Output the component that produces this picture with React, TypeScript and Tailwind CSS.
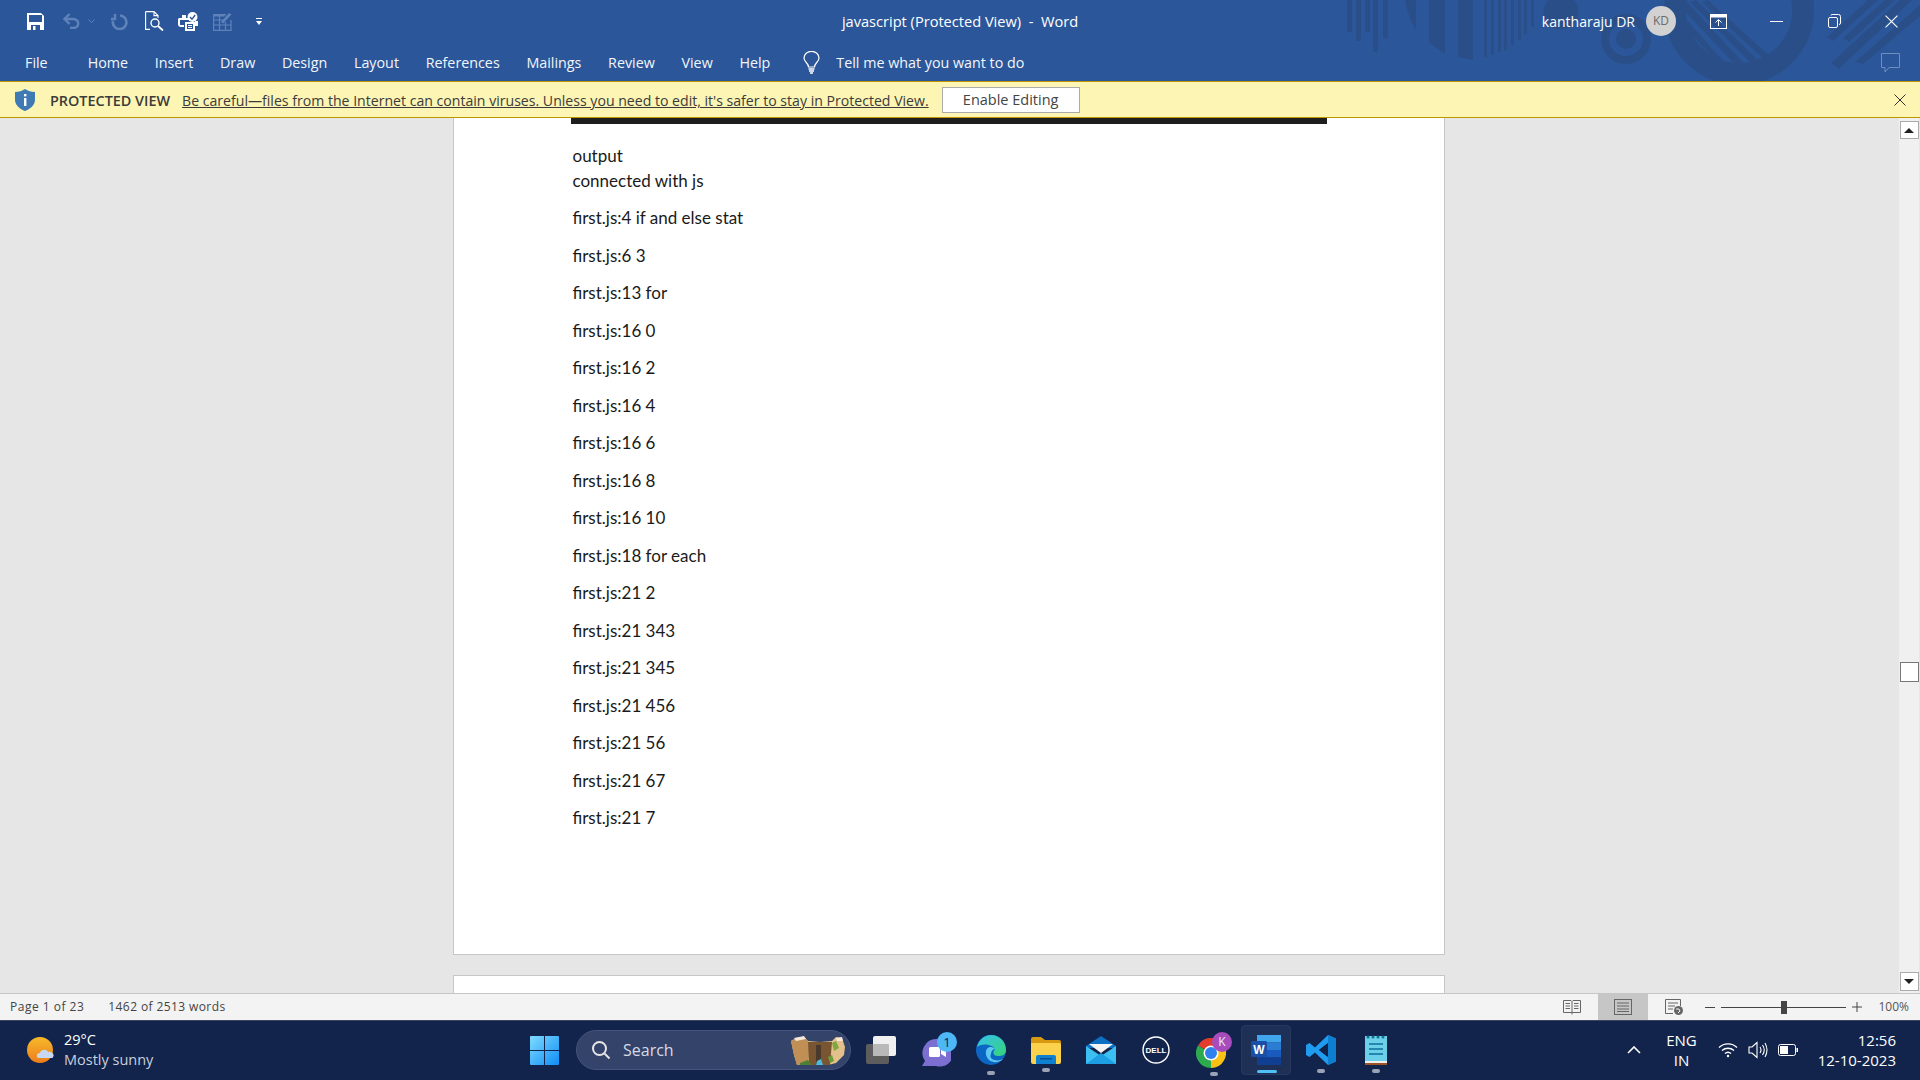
import React from "react";

const tabs = ["Home", "Insert", "Draw", "Design", "Layout", "References", "Mailings", "Review", "View", "Help"];

const docLines = [
  "first.js:4 if and else stat",
  "first.js:6 3",
  "first.js:13 for",
  "first.js:16 0",
  "first.js:16 2",
  "first.js:16 4",
  "first.js:16 6",
  "first.js:16 8",
  "first.js:16 10",
  "first.js:18 for each",
  "first.js:21 2",
  "first.js:21 343",
  "first.js:21 345",
  "first.js:21 456",
  "first.js:21 56",
  "first.js:21 67",
  "first.js:21 7",
];

// ribbon background art, sits behind the title bar
const TitleArt = () => (
  <svg className="absolute left-[1340px] top-0 pointer-events-none" width="580" height="81" viewBox="0 0 580 81" fill="#2a4f88">
    <rect x="7" y="0" width="5" height="32" />
    <rect x="16" y="0" width="5" height="41" />
    <rect x="25" y="0" width="5" height="32" />
    <rect x="33" y="0" width="5" height="52" />
    <rect x="43" y="0" width="5" height="38" />
    <path d="M65 0 C67 12 71 22 76 30 V0 Z" />
    <path d="M89 0 V43 L105 54 V0 Z" />
    <path d="M118 0 V57 L133 60 V0 Z" />
    <rect x="144" y="0" width="3" height="57" />
    <rect x="151" y="0" width="3" height="55" />
    <rect x="158" y="0" width="3" height="52" />
    <rect x="164" y="0" width="3" height="50" />
    <rect x="171" y="0" width="3" height="45" />
    <rect x="178" y="0" width="3" height="40" />
    <rect x="184" y="0" width="3" height="34" />
    <rect x="191" y="0" width="3" height="27" />
    <circle cx="221" cy="12" r="17.5" />
    <circle cx="286" cy="39" r="21" fill="none" stroke="#2a4f88" strokeWidth="8" />
    <circle cx="286" cy="39" r="10" />
    <circle cx="399" cy="10" r="64" fill="none" stroke="#2a4f88" strokeWidth="22" />
    <path d="M338 10 L391 70 L384 70 L333 14 Z" />
    <path d="M345 0 L410 70 L402 72 L338 4 Z" />
    <path d="M356 0 L424 66 L418 70 L350 2 Z" />
    <path d="M368 0 L434 60 L430 65 L362 2 Z" />
    <path d="M487 37 L528 0 L538 0 L493 41 Z" />
    <path d="M503 38 L545 0 L555 0 L509 42 Z" />
    <path d="M491 63 L560 0 L572 0 L499 69 Z" />
    <path d="M515 62 L580 5 L580 16 L523 64 Z" />
  </svg>
);

const SaveIcon = () => (
  <svg width="17" height="17" viewBox="0 0 17 17">
    <path d="M0 0 H14 L17 3 V17 H0 Z" fill="#fff" />
    <rect x="2" y="2" width="13" height="7" fill="#2b579a" />
    <rect x="4" y="12" width="9" height="5" fill="#2b579a" />
    <rect x="6" y="13" width="2.5" height="4" fill="#fff" />
  </svg>
);

const UndoIcon = () => (
  <svg width="18" height="16" viewBox="0 0 18 16" fill="none" stroke="#5f83b8" strokeWidth="2.4">
    <path d="M3 6 H11 C18 6 18 15 11 15 H8" />
    <path d="M7.5 1 L2.5 6 L7.5 11" />
  </svg>
);

const RedoIcon = () => (
  <svg width="18" height="17" viewBox="0 0 18 17" fill="none" stroke="#5f83b8" strokeWidth="2.6">
    <path d="M5 1 V6 H1" strokeWidth="2.4" />
    <path d="M10 2.5 A6.8 6.8 0 1 1 3 8" />
  </svg>
);

const PreviewIcon = () => (
  <svg width="19" height="20" viewBox="0 0 19 20" fill="none" stroke="#fff" strokeWidth="1.1">
    <path d="M.6 .6 H9 L13 4.6 V7 M9 .6 V4.6 H13 M.6 .6 V18.4 H5" />
    <circle cx="10" cy="12" r="4" strokeWidth="1.4" />
    <path d="M13 15 L18 19.5" strokeWidth="1.8" />
  </svg>
);

const PrintCheckIcon = () => (
  <svg width="20" height="19" viewBox="0 0 20 19">
    <path d="M4 3 H8 V6 H11 V8 H2 V13 H6 V15 H3 C1 15 0 14 0 12 V8 C0 6 1 6 2 6 H4 Z" fill="#fff" />
    <circle cx="14.5" cy="5" r="5" fill="#fff" />
    <path d="M12 5 L14 7.2 L17.2 3" fill="none" stroke="#2b579a" strokeWidth="1.4" />
    <rect x="7" y="10" width="10" height="9" fill="#fff" />
    <rect x="9" y="12" width="6" height="5" fill="#2b579a" />
    <path d="M10 13.5 H14 M10 15.5 H14" stroke="#fff" />
    <rect x="17" y="9" width="3" height="5" fill="#fff" />
  </svg>
);

const TableEditIcon = () => (
  <svg width="19" height="19" viewBox="0 0 19 19" fill="none" stroke="#5f83b8" strokeWidth="1.2">
    <path d="M.6 2.6 H13 M.6 2.6 V18.4 H18 V8 M.6 8 H11 M.6 13 H18 M6.5 2.6 V18.4 M12.5 10 V18.4" />
    <path d="M8 10 L16 1 L18.5 2.5 L10 11.5 Z" fill="#5f83b8" stroke="none" />
    <rect x=".6" y="2" width="11" height="2.5" fill="#5f83b8" stroke="none" />
  </svg>
);

const ShieldIcon = () => (
  <svg width="20" height="22" viewBox="0 0 20 22">
    <path d="M10 0 C13 2 16 3 20 3 V11 C20 16 15 20 10 22 C5 20 0 16 0 11 V3 C4 3 7 2 10 0 Z" fill="#3f7ab5" />
    <rect x="9" y="9" width="2.4" height="8" fill="#fff" />
    <rect x="9" y="5" width="2.4" height="2.4" fill="#fff" />
  </svg>
);

const CloseIcon = ({ size, color }: { size: number; color: string }) => (
  <svg width={size} height={size} viewBox="0 0 12 12" stroke={color} strokeWidth="1" fill="none">
    <path d="M.5 .5 L11.5 11.5 M11.5 .5 L.5 11.5" />
  </svg>
);

const Bulb = () => (
  <svg width="17" height="23" viewBox="0 0 17 23" fill="none" stroke="#fff" strokeWidth="1.2">
    <path d="M5.5 16 C5.5 12 1 11 1 7 A7.3 6.5 0 0 1 16 7 C16 11 11.5 12 11.5 16 Z" />
    <path d="M5.5 18 H11.5 M6 20 H11 M7 22 H10" strokeWidth="1.4" />
  </svg>
);

const WinIcon = () => (
  <svg width="29" height="29" viewBox="0 0 29 29">
    <defs>
      <linearGradient id="wing" x1="0" y1="0" x2="1" y2="1">
        <stop offset="0" stopColor="#7fdcff" />
        <stop offset="1" stopColor="#0f8cf5" />
      </linearGradient>
    </defs>
    <path d="M1 0 H14 V14 H0 V1 Q0 0 1 0 Z M15 0 H28 Q29 0 29 1 V14 H15 Z M0 15 H14 V29 H1 Q0 29 0 28 Z M15 15 H29 V28 Q29 29 28 29 H15 Z" fill="url(#wing)" />
  </svg>
);

const SearchArt = () => (
  <svg width="56" height="30" viewBox="0 0 56 30">
    <path d="M1 6 L6 3 L14 2 L18 6 L30 7 L42 6 L46 2 L52 3 L55 12 L54 20 L46 28 L38 30 L7 30 L4 20 Z" fill="#e4c08a" />
    <path d="M1 6 L6 3 L14 2 L18 6 L19 14 L18 30 L7 30 L4 20 Z" fill="#bf8f55" />
    <path d="M18 7 L42 7 L40 30 L19 30 Z" fill="#7a5531" />
    <path d="M26 10 H31 V30 H26 Z" fill="#4a3a2c" />
    <path d="M27 26 L31 24 L33 30 L26 30 Z" fill="#4fb9d8" />
    <path d="M42 8 L46 6 L49 13 L44 16 Z" fill="#7fa843" />
    <path d="M38 22 L42 20 L44 26 L40 28 Z" fill="#6d9c3a" />
    <path d="M10 28 L18 25 L22 30 L10 30 Z" fill="#4f7f33" />
    <path d="M4 3 L14 1 L16 4 L6 6 Z" fill="#f5e9dc" />
    <path d="M46 3 L52 2 L53 6 L47 6 Z" fill="#f5e9dc" />
  </svg>
);

const TaskView = () => (
  <div className="relative w-[30px] h-[28px]">
    <div className="absolute left-0 bottom-0 w-[23px] h-[20px] rounded-[2px] bg-[#5d5d5d]" />
    <div className="absolute right-0 top-0 w-[23px] h-[20px] rounded-[2px] bg-[#f0f0f0]" />
    <div className="absolute left-[7px] top-[8px] w-[16px] h-[12px] rounded-[1px] bg-[#b9b9b9]" />
  </div>
);

const TeamsIcon = () => (
  <div className="relative w-[36px] h-[36px]">
    <svg width="30" height="32" viewBox="0 0 30 32" className="absolute left-0 bottom-0">
      <path d="M15 3 A14 14 0 1 1 15 30 H1 L4 25 A14 14 0 0 1 15 3 Z" fill="#7b6fd1" />
      <rect x="8" y="11" width="11" height="10" rx="1.5" fill="#fff" />
      <path d="M20 14 L25 11 V21 L20 18 Z" fill="#fff" />
    </svg>
    <div className="absolute right-0 top-0 w-[20px] h-[20px] rounded-full bg-[#4db8f5] text-[13px] leading-[20px] text-center text-[#10204a]">1</div>
  </div>
);

const EdgeIcon = () => (
  <svg width="30" height="34" viewBox="0 0 30 30">
    <defs>
      <linearGradient id="edgeg" x1="0" y1="0" x2="1" y2="1">
        <stop offset="0" stopColor="#35c1f1" />
        <stop offset="1" stopColor="#36d475" />
      </linearGradient>
    </defs>
    <circle cx="15" cy="15" r="15" fill="#0c66c4" />
    <path d="M1 12 C3 4 9 0 15 0 C24 0 30 7 30 15 C30 20 26 21 22 21 C16 21 17 16 19 14 C16 9 6 8 1 12 Z" fill="url(#edgeg)" />
    <path d="M15 12 C9 12 8 20 13 25 C17 28 23 28 27 24 C22 27 12 25 15 19 C15 16 17 14 19 14 C18 13 17 12 15 12 Z" fill="#5fc8f2" />
  </svg>
);

const FolderIcon = () => (
  <svg width="30" height="27" viewBox="0 0 30 27">
    <path d="M0 2 Q0 0 2 0 H10 L14 3 H28 Q30 3 30 5 V8 H0 Z" fill="#d79a10" />
    <path d="M0 6 H28 Q30 6 30 8 V25 Q30 27 28 27 H2 Q0 27 0 25 Z" fill="#fcd24c" />
    <path d="M5 27 V20 Q5 18 7 18 H23 Q25 18 25 20 V27 Z" fill="#1080d0" />
    <rect x="9" y="21" width="12" height="1.5" fill="#0a4f90" />
  </svg>
);

const MailIcon = () => (
  <svg width="30" height="28" viewBox="0 0 30 28">
    <path d="M15 0 L30 10 V12 H0 V10 Z" fill="#0d6fc4" />
    <path d="M3 8 H27 L15 17 Z" fill="#f3f3f3" />
    <path d="M0 10 L15 20 L30 10 V28 H0 Z" fill="#3cc0f2" />
    <path d="M0 28 L15 17 L30 28 Z" fill="#1d9fe3" />
  </svg>
);

const DellIcon = () => (
  <svg width="28" height="28" viewBox="0 0 28 28">
    <circle cx="14" cy="14" r="13" fill="none" stroke="#fff" strokeWidth="1.4" />
    <text x="14" y="17" textAnchor="middle" fontSize="8" fontWeight="700" fill="#fff" fontFamily="Liberation Sans">DELL</text>
  </svg>
);

const ChromeIcon = () => (
  <div className="relative w-[36px] h-[36px]">
    <svg width="30" height="30" viewBox="0 0 30 30" className="absolute left-0 bottom-0">
      <path d="M15 15 L2 7.5 A15 15 0 0 1 28 7.5 Z" fill="#e33b2e" />
      <path d="M15 15 L2 7.5 A15 15 0 0 0 15 30 Z" fill="#2da94f" />
      <path d="M15 15 L28 7.5 A15 15 0 0 1 15 30 Z" fill="#fbc116" />
      <circle cx="15" cy="15" r="7.5" fill="#fff" />
      <circle cx="15" cy="15" r="6" fill="#2f7fed" />
    </svg>
    <div className="absolute right-0 top-0 w-[20px] h-[20px] rounded-full bg-[#a84bbd] text-[12px] leading-[20px] text-center text-[#eee]">K</div>
  </div>
);

const WordIcon = () => (
  <svg width="30" height="30" viewBox="0 0 30 30">
    <rect x="6" y="0" width="24" height="7.5" fill="#41a5ee" />
    <rect x="6" y="7.5" width="24" height="7.5" fill="#2b7cd3" />
    <rect x="6" y="15" width="24" height="7.5" fill="#185abd" />
    <rect x="6" y="22.5" width="24" height="7.5" fill="#103f91" />
    <rect x="0" y="6" width="16" height="16" rx="1.5" fill="#1a4fa8" />
    <text x="8" y="19" textAnchor="middle" fontSize="12" fontWeight="700" fill="#fff" fontFamily="Liberation Sans">W</text>
  </svg>
);

const VsCodeIcon = () => (
  <svg width="30" height="30" viewBox="0 0 30 30">
    <path d="M22 0 L30 3.5 V26.5 L22 30 L9 17.5 L3.5 22 L0 20 V10 L3.5 8 L9 12.5 Z M22 8 L13 15 L22 22 Z" fill="#1f9cf0" fillRule="evenodd" />
    <path d="M22 0 L30 3.5 V26.5 L22 30 Z" fill="#0e7fd0" />
    <path d="M22 8 V22 L13 15 Z" fill="#10234b" />
  </svg>
);

const NotepadIcon = () => (
  <svg width="22" height="30" viewBox="0 0 22 30">
    <rect x="0" y="1" width="22" height="26" fill="#6bd0e8" />
    <rect x="0" y="26" width="22" height="2" fill="#eee" />
    <rect x="0" y="28" width="22" height="2" fill="#9a5227" />
    <path d="M4 9 H18 M4 14 H18 M4 19 H18" stroke="#0d6f9c" strokeWidth="1.5" />
    <circle cx="3" cy="2" r="1.5" fill="#16708f" />
    <circle cx="8" cy="2" r="1.5" fill="#16708f" />
    <circle cx="13" cy="2" r="1.5" fill="#16708f" />
    <circle cx="18" cy="2" r="1.5" fill="#16708f" />
  </svg>
);

const SunCloud = () => (
  <svg width="28" height="26" viewBox="0 0 28 26">
    <defs>
      <linearGradient id="sung" x1="0" y1="0" x2="0" y2="1">
        <stop offset="0" stopColor="#f7b92a" />
        <stop offset="1" stopColor="#ec7d1c" />
      </linearGradient>
    </defs>
    <ellipse cx="13" cy="13" rx="13" ry="13" fill="url(#sung)" />
    <path d="M12 21 C9 21 9 16 13 16 C14 12 20 12 21 15 C25 14 28 18 26 20 C26 21 25 21 24 21 Z" fill="#c7d9f2" />
  </svg>
);

const StatusIcons = {
  read: (
    <svg width="18" height="16" viewBox="0 0 18 16" fill="none" stroke="#666">
      <path d="M.5 1.5 H8 L9 2.5 L10 1.5 H17.5 V13.5 H.5 Z M9 2.5 V15.5" />
      <path d="M2.5 4.5 H7 M2.5 7 H7 M2.5 9.5 H7 M11 4.5 H15.5 M11 7 H15.5 M11 9.5 H15.5" />
    </svg>
  ),
  print: (
    <svg width="18" height="16" viewBox="0 0 18 16" fill="none" stroke="#666">
      <rect x=".5" y=".5" width="17" height="15" />
      <path d="M3 4 H15 M3 7 H15 M3 10 H15 M3 12.5 H15" />
    </svg>
  ),
  web: (
    <svg width="18" height="16" viewBox="0 0 18 16" fill="none" stroke="#666">
      <path d="M8 14.5 H.5 V.5 H15.5 V7" />
      <path d="M3 4 H13 M3 7 H10 M3 10 H8" />
      <circle cx="13.5" cy="11.5" r="4.5" fill="#666" stroke="none" />
      <path d="M11 10 H14 L15 12 L13 14" stroke="#f3f3f3" />
    </svg>
  ),
};

export default function App() {
  return (
    <div className="w-[1920px] h-[1080px] flex flex-col overflow-hidden font-['Open_Sans',sans-serif] bg-[#e6e6e6]">
      {/* title bar + tabs */}
      <header className="relative h-[81px] bg-[#2b579a] text-white shrink-0 overflow-hidden">
        <TitleArt />
        <div className="relative h-[42px] grid grid-cols-[1fr_auto_1fr] items-center">
          <div className="flex items-center pl-[27px]">
            <SaveIcon />
            <div className="ml-[18px]"><UndoIcon /></div>
            <svg className="ml-[8px]" width="7" height="4" viewBox="0 0 7 4" fill="none" stroke="#5f83b8"><path d="M.5 .5 L3.5 3.5 L6.5 .5" /></svg>
            <div className="ml-[15px]"><RedoIcon /></div>
            <div className="ml-[17px]"><PreviewIcon /></div>
            <div className="ml-[14px]"><PrintCheckIcon /></div>
            <div className="ml-[15px]"><TableEditIcon /></div>
            <svg className="ml-[24px]" width="6" height="7" viewBox="0 0 6 7" fill="#fff"><rect width="6" height="1" /><path d="M0 3 H6 L3 7 Z" /></svg>
          </div>
          <div className="mt-[2px] text-[14.6px]">javascript (Protected View)&nbsp; -&nbsp; Word</div>
          <div className="flex items-center justify-end">
            <span className="text-[14px]">kantharaju DR</span>
            <div className="ml-[11px] w-[30px] h-[30px] rounded-full bg-[#d2d2d2] text-[#6b6b6b] text-[12px] flex items-center justify-center">KD</div>
            <svg className="ml-[34px]" width="17" height="15" viewBox="0 0 17 15" fill="none" stroke="#fff"><rect x=".5" y=".5" width="16" height="14" /><rect x="0" y="0" width="17" height="3" fill="#fff" /><path d="M8.5 12 V6 M5.5 8.5 L8.5 5.5 L11.5 8.5" /></svg>
            <div className="ml-[43px] w-[13px] h-[1px] bg-white" />
            <svg className="ml-[45px]" width="13" height="14" viewBox="0 0 13 14" fill="none" stroke="#fff"><rect x=".5" y="3.5" width="9" height="10" rx="1.5" /><path d="M3 1.5 Q3 .5 4 .5 H10.5 Q12.5 .5 12.5 2.5 V9 Q12.5 10.5 11 10.5" /></svg>
            <div className="ml-[44px] mr-[22px]"><CloseIcon size={13} color="#fff" /></div>
          </div>
        </div>
        <div className="relative h-[39px] pt-[2px] flex items-center text-[14.3px] text-[#f2f5fa]">
          <span className="ml-[25px] mr-[40px]">File</span>
          <div className="flex items-center gap-[26.7px]">
            {tabs.map((t) => (
              <span key={t}>{t}</span>
            ))}
          </div>
          <div className="ml-[33px]"><Bulb /></div>
          <span className="ml-[16px]">Tell me what you want to do</span>
          <svg className="ml-auto mr-[20px]" width="19" height="20" viewBox="0 0 19 20" fill="none" stroke="#6d8fc0"><path d="M.5 .5 H18.5 V14.5 H8 L4 19 V14.5 H.5 Z" /></svg>
        </div>
      </header>

      {/* protected view banner */}
      <div className="h-[37px] shrink-0 flex items-center bg-[#fcf5b4] border-y border-[#bf9500] text-[#3b3b3b] text-[14.1px]">
        <div className="ml-[15px]"><ShieldIcon /></div>
        <span className="ml-[15px] mt-[2px] font-semibold text-[14.4px]">PROTECTED VIEW</span>
        <span className="ml-[12px] mt-[2px] underline">Be careful—files from the Internet can contain viruses. Unless you need to edit, it's safer to stay in Protected View.</span>
        <button className="ml-[13px] w-[138px] h-[26px] bg-white border border-[#ababab] text-[14.5px] text-[#444]">Enable Editing</button>
        <div className="ml-auto mr-[14px]"><CloseIcon size={12} color="#333" /></div>
      </div>

      {/* document area */}
      <main className="flex-1 min-h-0 flex">
        <div className="flex-1 flex flex-col items-center overflow-hidden pr-[2px]">
          <div className="w-[992px] h-[837px] shrink-0 bg-white border-x border-b border-[#c6c6c6]">
            <div className="ml-[117px] w-[756px] h-[6px] bg-[#1e1e1e]" />
            <div className="pl-[119px] pt-[20px] font-[Lato,sans-serif] text-[17px] leading-[24.5px] text-[#1a1a1a]">
              <p>output</p>
              <p className="mb-[13px]">connected with js</p>
              {docLines.map((line, i) => (
                <p key={i} className="mb-[13px]">{line}</p>
              ))}
            </div>
          </div>
          <div className="mt-[20px] w-[992px] h-[40px] shrink-0 bg-white border border-[#c6c6c6]" />
        </div>
        <div className="w-[20px] mr-px shrink-0 bg-[#f0f0f0] flex flex-col pt-[3px] pb-[2px] items-center">
          <div className="w-[19px] h-[18px] bg-white border border-[#ababab] flex items-center justify-center">
            <div className="w-0 h-0 border-x-[5px] border-x-transparent border-b-[5px] border-b-[#222]" />
          </div>
          <div className="mt-[523px] w-[19px] h-[20px] bg-white border border-[#777]" />
          <div className="mt-auto w-[19px] h-[19px] bg-white border border-[#ababab] flex items-center justify-center">
            <div className="w-0 h-0 border-x-[5px] border-x-transparent border-t-[5px] border-t-[#222]" />
          </div>
        </div>
      </main>

      {/* status bar */}
      <div className="h-[27px] shrink-0 flex items-center bg-[#f3f3f3] border-t border-[#c6c6c6] text-[12px] text-[#444]">
        <span className="ml-[10px] tracking-[0.5px]">Page 1 of 23</span>
        <span className="ml-[24px] tracking-[0.4px]">1462 of 2513 words</span>
        <div className="ml-auto flex items-center h-full">
          <div className="mr-[17px]">{StatusIcons.read}</div>
          <div className="w-[50px] h-full bg-[#c6c6c6] flex items-center justify-center">{StatusIcons.print}</div>
          <div className="ml-[17px]">{StatusIcons.web}</div>
          <div className="ml-[22px] w-[10px] h-px bg-[#444]" />
          <div className="relative ml-[6px] w-[125px] h-px bg-[#444]">
            <div className="absolute left-[60px] -top-[6px] w-[6px] h-[13px] bg-[#444]" />
          </div>
          <svg className="ml-[6px]" width="10" height="10" viewBox="0 0 10 10" stroke="#444"><path d="M0 5 H10 M5 0 V10" /></svg>
          <span className="ml-[16px] mr-[11px] text-[#555]">100%</span>
        </div>
      </div>

      {/* taskbar */}
      <footer className="h-[60px] shrink-0 bg-[#12244c] text-white relative flex items-center">
        <div className="absolute left-0 right-0 top-0 h-px bg-[#3a4660]" />
        <div className="w-[530px] shrink-0 flex items-center pl-[27px]">
          <SunCloud />
          <div className="ml-[9px] text-[14.5px] leading-[20px]">
            <div>29°C</div>
            <div className="text-[#c9d0dc]">Mostly sunny</div>
          </div>
        </div>
        <WinIcon />
        <div className="ml-[17px] w-[275px] h-[40px] rounded-full bg-[#34436a] border border-[#45537a] flex items-center pl-[14px] pr-[4px]">
          <svg width="20" height="20" viewBox="0 0 20 20" fill="none" stroke="#e6e6e6" strokeWidth="2"><circle cx="8.5" cy="8.5" r="6.5" /><path d="M13.5 13.5 L18.5 18.5" /></svg>
          <span className="ml-[12px] text-[16px] text-[#d6dae4]">Search</span>
          <div className="ml-auto"><SearchArt /></div>
        </div>
        <div className="ml-[15px]"><TaskView /></div>
        <div className="ml-[25px]"><TeamsIcon /></div>
        <TaskItem ml="ml-[19px]"><EdgeIcon /></TaskItem>
        <TaskItem ml="ml-[25px]"><FolderIcon /></TaskItem>
        <div className="ml-[25px]"><MailIcon /></div>
        <div className="ml-[26px]"><DellIcon /></div>
        <TaskItem ml="ml-[26px]"><ChromeIcon /></TaskItem>
        <div className="relative ml-[9px] w-[50px] h-[50px] rounded-[4px] bg-[#1f3056] border border-[#28395f] flex items-center justify-center">
          <WordIcon />
          <div className="absolute bottom-[1px] left-[15px] w-[20px] h-[3px] rounded-full bg-[#4fc0f5]" />
        </div>
        <TaskItem ml="ml-[15px]"><VsCodeIcon /></TaskItem>
        <TaskItem ml="ml-[29px]"><NotepadIcon /></TaskItem>

        <div className="ml-auto flex items-center">
          <svg width="14" height="8" viewBox="0 0 14 8" fill="none" stroke="#fff" strokeWidth="1.6"><path d="M1 7 L7 1 L13 7" /></svg>
          <div className="ml-[25px] text-[15px] leading-[20px] text-center">
            <div>ENG</div>
            <div>IN</div>
          </div>
          <svg className="ml-[21px]" width="20" height="16" viewBox="0 0 20 16" fill="none" stroke="#fff" strokeWidth="1.4">
            <path d="M1 5.5 A13 13 0 0 1 19 5.5 M4 8.5 A9 9 0 0 1 16 8.5 M7 11.5 A4.5 4.5 0 0 1 13 11.5" />
            <circle cx="10" cy="14" r="1.2" fill="#fff" stroke="none" />
          </svg>
          <svg className="ml-[10px]" width="20" height="18" viewBox="0 0 20 18" fill="none" stroke="#fff" strokeWidth="1.1">
            <path d="M1 6 H4 L9 1.5 V16.5 L4 12 H1 Z M12 6 Q14 9 12 12 M14.5 4 Q18 9 14.5 14 M17 2 Q21 9 17 16" />
          </svg>
          <svg className="ml-[10px]" width="20" height="12" viewBox="0 0 20 12" fill="none" stroke="#fff">
            <rect x=".5" y=".5" width="17" height="11" rx="2" />
            <rect x="2" y="2" width="8" height="8" fill="#fff" stroke="none" />
            <rect x="18.5" y="4" width="1.5" height="4" fill="#fff" stroke="none" />
          </svg>
          <div className="ml-[20px] mr-[24px] text-[15px] leading-[20px] text-right">
            <div>12:56</div>
            <div>12-10-2023</div>
          </div>
        </div>
      </footer>
    </div>
  );
}

function TaskItem({ ml, children }: { ml: string; children: React.ReactNode }) {
  return (
    <div className={`relative ${ml}`}>
      {children}
      <div className="absolute left-1/2 -translate-x-1/2 -bottom-[8px] w-[8px] h-[4px] rounded-full bg-[#9aa3b5]" />
    </div>
  );
}
